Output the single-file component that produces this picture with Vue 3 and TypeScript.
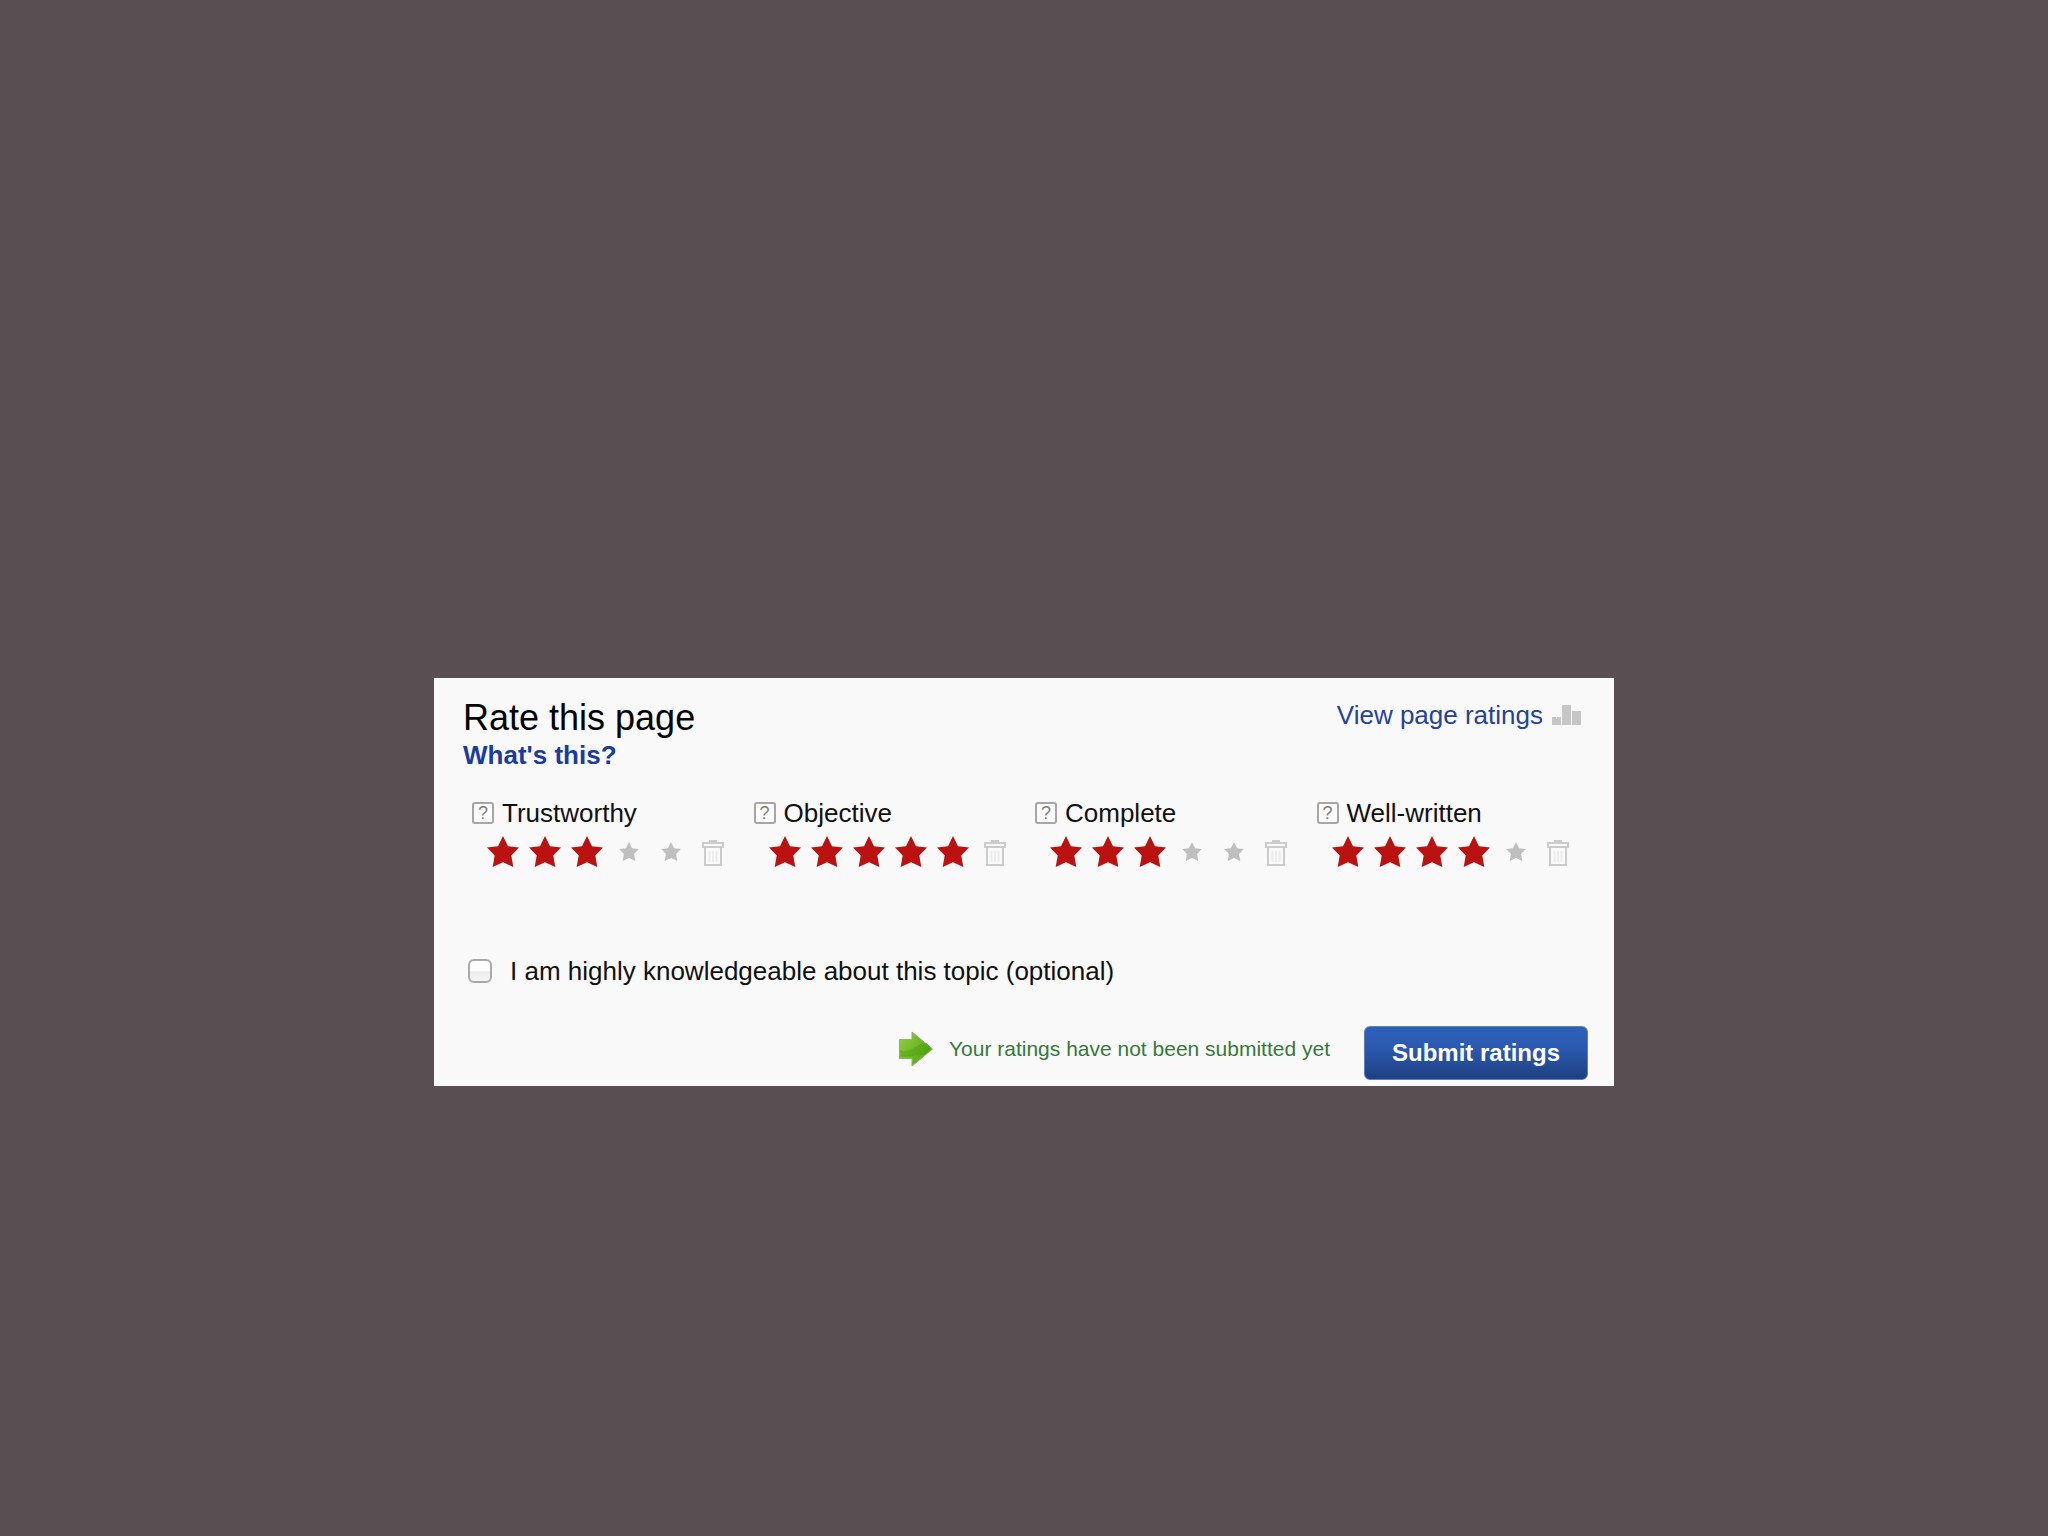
<script setup lang="ts">
import { ref } from 'vue'

interface Rating {
  id: string
  label: string
  value: number
}

const ratings = ref<Rating[]>([
  { id: 'trustworthy', label: 'Trustworthy', value: 3 },
  { id: 'objective', label: 'Objective', value: 5 },
  { id: 'complete', label: 'Complete', value: 3 },
  { id: 'well-written', label: 'Well-written', value: 4 },
])

const knowledgeable = ref(false)
</script>

<template>
  <main class="page">
    <form class="panel" @submit.prevent>
      <header class="head">
        <div>
          <h1 class="title">Rate this page</h1>
          <a class="about" href="#about">What's this?</a>
        </div>
        <a class="view" href="#ratings">
          View page ratings
          <svg class="chart" viewBox="0 0 29 20" aria-hidden="true">
            <path d="M0 12h4v2h1v-2h4v8H0zM10 0h9v20h-9zM20 6h9v14h-9z" />
          </svg>
        </a>
      </header>

      <div class="ratings">
        <div v-for="r in ratings" :key="r.id" class="rating" role="radiogroup" :aria-labelledby="r.id">
          <div class="name">
            <button type="button" class="help">?</button>
            <span :id="r.id">{{ r.label }}</span>
          </div>
          <div class="stars">
            <label v-for="n in 5" :key="n" class="cell">
              <input v-model="r.value" class="radio" type="radio" :name="r.id" :value="n" :aria-label="`${n}`" />
              <svg class="star" :class="{ on: n <= r.value }" viewBox="0 0 32 31" aria-hidden="true">
                <path d="M16 0l5 10.200 11 1.400-7.700 8L26.300 31 16 26.200 5.700 31l2-11.400L0 11.600l11-1.400z" />
              </svg>
            </label>
            <button type="button" class="cell trash" aria-label="Clear" @click="r.value = 0">
              <svg class="bin" viewBox="0 0 22 26" aria-hidden="true">
                <path class="line" d="M1 3h20v4H1zM3 7h16v18H3z" />
                <path class="lid" d="M7 0h8v3H7z" />
                <path class="rib" d="M7.500 11v11M11 11v11M14.500 11v11" />
              </svg>
            </button>
          </div>
        </div>
      </div>

      <label class="expert">
        <input v-model="knowledgeable" class="check" type="checkbox" />
        I am highly knowledgeable about this topic (optional)
      </label>

      <footer class="foot">
        <p class="note">
          <svg class="arrow" viewBox="0 0 34 36" aria-hidden="true">
            <defs>
              <linearGradient id="leaf" x1="0" y1="0" x2="1" y2="0.6">
                <stop offset="0" stop-color="#9ccb48" />
                <stop offset="0.5" stop-color="#74bb28" />
                <stop offset="1" stop-color="#55a516" />
              </linearGradient>
            </defs>
            <path d="M.5 8.500H13V1l20.500 17L13 35V27.500H.5z" fill="url(#leaf)" stroke="#8fae70" />
            <path d="M1 19Q8 22 18 15T32 18L27 23Q18 25 1 26z" fill="#45a008" opacity=".45" />
          </svg>
          Your ratings have not been submitted yet
        </p>
        <button class="submit" type="submit">Submit ratings</button>
      </footer>
    </form>
  </main>
</template>

<style>
body {
  margin: 0;
  background: #594e51;
}
</style>

<style scoped>
.page {
  padding: 678px 434px 0;
  font-family: "Liberation Sans", Arial, sans-serif;
  font-size: 26px;
  line-height: 30px;
  color: #111;
}
.panel {
  box-sizing: border-box;
  padding: 20px 26px 6px 29px;
  background: #f9f9fa;
}
.head {
  display: flex;
  justify-content: space-between;
  align-items: flex-start;
}
.title {
  margin: 0;
  font-size: 36px;
  font-weight: 400;
  line-height: 40px;
  color: #000;
}
.about {
  display: block;
  line-height: 34px;
  font-weight: 700;
  color: #1b3c9c;
  text-decoration: none;
}
.view {
  display: flex;
  align-items: center;
  gap: 9px;
  padding: 2px 7px 0 0;
  color: #25429b;
  text-decoration: none;
}
.chart {
  width: 29px;
  height: 20px;
  fill: #c6c6c6;
}
.ratings {
  display: grid;
  grid-template-columns: repeat(4, 1fr);
  margin: 26px -10px 0 9px;
}
.name {
  display: flex;
  align-items: center;
  gap: 8px;
}
.help {
  box-sizing: border-box;
  width: 22px;
  height: 22px;
  padding: 0;
  border: 2px solid #a6a6a6;
  border-radius: 3px;
  background: #fcfcfc;
  font: 18px/18px "Liberation Sans", Arial, sans-serif;
  color: #808080;
}
.stars {
  display: flex;
  margin-left: 10px;
}
.cell {
  position: relative;
  display: flex;
  align-items: center;
  justify-content: center;
  width: 42px;
  height: 46px;
}
.radio {
  position: absolute;
  inset: 0;
  margin: 0;
  opacity: 0;
}
.star {
  width: 20px;
  height: 19px;
  fill: #bfbfbf;
}
.star.on {
  width: 32px;
  height: 31px;
  fill: #ba1210;
}
.trash {
  padding: 4px 0 0;
  border: 0;
  background: none;
}
.bin {
  width: 22px;
  height: 26px;
  fill: none;
}
.line {
  stroke: #cbcbcb;
  stroke-width: 2;
}
.lid {
  fill: #cbcbcb;
}
.rib {
  stroke: #ededed;
  stroke-width: 2;
}
.expert {
  display: flex;
  align-items: center;
  gap: 18px;
  width: fit-content;
  margin: 82px 0 40px 5px;
}
.check {
  appearance: none;
  box-sizing: border-box;
  width: 24px;
  height: 24px;
  margin: 0;
  border: 2px solid #a9a9a9;
  border-radius: 6px;
  background: linear-gradient(#fff 45%, #ececec 55%, #f6f6f6);
}
.check:checked {
  background: #2c5ab4;
}
.foot {
  display: flex;
  justify-content: flex-end;
  align-items: center;
  gap: 34px;
}
.note {
  display: flex;
  align-items: center;
  gap: 16px;
  margin: 0;
  padding-bottom: 9px;
  font-size: 21px;
  color: #37783a;
}
.arrow {
  width: 34px;
  height: 36px;
}
.submit {
  height: 54px;
  padding: 0 27px;
  border: 1px solid #5c80bd;
  border-radius: 6px;
  background: linear-gradient(#2d60ba, #2b59b0 40%, #1f4080);
  font: 700 24px/30px "Liberation Sans", Arial, sans-serif;
  color: #fff;
}
</style>
